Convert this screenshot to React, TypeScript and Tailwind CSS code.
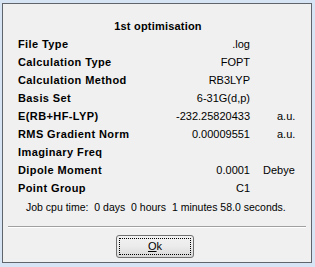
import React from "react";

const rows: { label: string; value: string; unit?: string; unitPad?: string }[] = [
  { label: "File Type", value: ".log" },
  { label: "Calculation Type", value: "FOPT" },
  { label: "Calculation Method", value: "RB3LYP" },
  { label: "Basis Set", value: "6-31G(d,p)" },
  { label: "E(RB+HF-LYP)", value: "-232.25820433", unit: "a.u.", unitPad: "pl-[27px]" },
  { label: "RMS Gradient Norm", value: "0.00009551", unit: "a.u.", unitPad: "pl-[27px]" },
  { label: "Imaginary Freq", value: "" },
  { label: "Dipole Moment", value: "0.0001", unit: "Debye", unitPad: "pl-[13px]" },
  { label: "Point Group", value: "C1" },
];

export default function App() {
  return (
    <div
      className="w-[315px] h-[267px] bg-[#d6e4f4] pt-[3px] pl-[2px] pr-[3px] pb-[4px] text-black"
      style={{ fontFamily: "Tahoma, 'Liberation Sans', Arial, sans-serif" }}
    >
      <div className="h-full border border-[#5f656b] bg-[#f0f0f0] flex flex-col">
        <div className="pt-[14px] h-[31px] leading-[17px] text-center text-[11px] font-bold tracking-[0.2px] pl-[2px]">
          1st optimisation
        </div>
        <div className="pl-[15px] pr-[4px] flex flex-col">
          {rows.map((r) => (
            <div key={r.label} className="flex h-[18px] items-center text-[11px] leading-[18px]">
              <div className="flex-1 font-bold tracking-[0.4px]">{r.label}</div>
              <div className="text-right">{r.value}</div>
              <div className={`w-[57px] ${r.unitPad ?? ""}`}>{r.unit ?? ""}</div>
            </div>
          ))}
        </div>
        <div className="mt-[1px] pl-[23px] text-[10.5px] leading-[18px] whitespace-pre">
          {"Job cpu time:  0 days  0 hours  1 minutes 58.0 seconds."}
        </div>
        <div className="mt-[10px] mx-[5px] h-[2px] border-t border-[#a0a0a0] border-b border-b-white" />
        <div className="flex justify-center mt-[7px] pr-[4px]">
          <button className="w-[78px] h-[23px] rounded-[3px] border border-[#707070] bg-gradient-to-b from-[#f2f2f2] via-[#ebebeb] to-[#d8d8d8] p-[2px]">
            <div className="h-full w-full border border-dotted border-black flex items-center justify-center text-[11px]">
              <span>
                <span className="underline">O</span>k
              </span>
            </div>
          </button>
        </div>
      </div>
    </div>
  );
}
